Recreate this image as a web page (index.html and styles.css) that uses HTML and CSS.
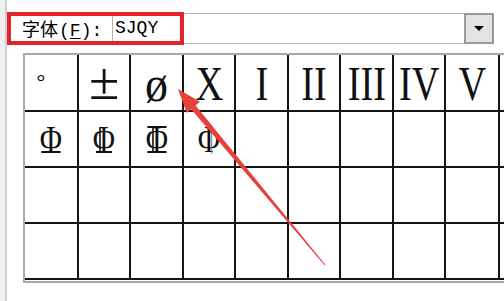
FILE: index.html
```html
<!DOCTYPE html>
<html lang="zh-CN">
<head>
<meta charset="utf-8">
<title>字体</title>
<link rel="stylesheet" href="styles.css">
</head>
<body>
<div class="app">
  <div class="strip"></div>
  <div class="main">
    <div class="font-row">
      <label class="font-label">字体<span class="lat">(<u>F</u>):</span></label>
      <div class="combo">
        <span class="combo-value">SJQY</span>
        <span class="combo-btn"><svg width="10" height="6" viewBox="0 0 10 6"><polygon points="0,0 10,0 5,5" fill="#000"/></svg></span>
      </div>
    </div>
    <div class="grid-frame">
      <div class="grid">
        <div class="cell top"><span class="deg">°</span></div>
        <div class="cell top"><span class="sym pm">±</span></div>
        <div class="cell top"><span class="sym phi">ø</span></div>
        <div class="cell top"><span class="sym">X</span></div>
        <div class="cell top"><span class="sym">I</span></div>
        <div class="cell top"><span class="sym">II</span></div>
        <div class="cell top"><span class="sym">III</span></div>
        <div class="cell top"><span class="sym">IV</span></div>
        <div class="cell top"><span class="sym">V</span></div>
        <div class="cell top"></div>

        <div class="cell mid"><span class="rebar r1">Φ<i class="bar bottom"></i></span></div>
        <div class="cell mid"><span class="rebar r2">Φ<i class="stem left"></i><i class="bar bottom short"></i></span></div>
        <div class="cell mid"><span class="rebar r3">Φ<i class="stem left"></i><i class="bar top"></i><i class="bar bottom"></i></span></div>
        <div class="cell mid"><span class="rebar r4">Φ<i class="stem right thin"></i></span></div>
        <div class="cell"></div><div class="cell"></div><div class="cell"></div><div class="cell"></div><div class="cell"></div><div class="cell"></div>

        <div class="cell"></div><div class="cell"></div><div class="cell"></div><div class="cell"></div><div class="cell"></div>
        <div class="cell"></div><div class="cell"></div><div class="cell"></div><div class="cell"></div><div class="cell"></div>

        <div class="cell"></div><div class="cell"></div><div class="cell"></div><div class="cell"></div><div class="cell"></div>
        <div class="cell"></div><div class="cell"></div><div class="cell"></div><div class="cell"></div><div class="cell"></div>
      </div>
    </div>
  </div>
</div>
<div class="highlight"></div>
<svg class="arrow" width="504" height="301" viewBox="0 0 504 301">
  <polygon points="178,89 200,101.8 195.6,105.6 325.4,264.7 324.6,265.3 191.2,109.2 186.8,113" fill="#e8403b"/>
</svg>
</body>
</html>
```
FILE: styles.css
```css
* { box-sizing: border-box; }
html, body {
  margin: 0;
  padding: 0;
  width: 504px;
  height: 301px;
  overflow: hidden;
  background: #fff;
}
body {
  position: relative;
  font-family: "Noto Sans CJK SC", sans-serif;
  color: #000;
}
.app {
  display: flex;
  height: 301px;
}
.strip {
  flex: none;
  width: 7px;
  background: #f0f0f0;
  border-right: 2px solid #d0d0d0;
}
.main {
  flex: 1;
  min-width: 0;
  padding-top: 13px;
  overflow: hidden;
}
.font-row {
  display: flex;
  height: 31px;
}
.font-label {
  flex: none;
  width: 105px;
  padding-left: 15px;
  font-size: 18px;
  line-height: 31px;
  white-space: nowrap;
}
.font-label .lat {
  font-family: "Liberation Mono", monospace;
  font-size: 18px;
  margin-left: 1px;
}
.font-label u { text-decoration-thickness: 1px; text-underline-offset: 2px; }
.combo {
  flex: none;
  width: 382px;
  display: flex;
  border: 1px solid #b4b4b4;
}
.combo-value {
  flex: 1;
  font-family: "Liberation Mono", monospace;
  font-size: 18px;
  line-height: 29px;
  padding-left: 2px;
}
.combo-btn {
  flex: none;
  width: 30px;
  display: flex;
  align-items: center;
  justify-content: center;
  background: #e3e3e3;
  border: 2px solid #9a9a9a;
  margin: -1px -1px -1px 0;
}
.grid-frame {
  margin: 9px 0 0 16px;
  border-left: 2px solid #a8a8a8;
  border-top: 2px solid #a8a8a8;
  border-bottom: 2px solid #a8a8a8;
  padding-bottom: 1px;
  overflow: hidden;
}
.grid {
  display: grid;
  grid-template-columns: 54px 52px 53px 52px 53px 52px 53px 52px 54px 52px;
  grid-template-rows: 57px 56px 56px 56px;
}
.cell {
  border-right: 2px solid #141414;
  border-bottom: 2px solid #141414;
  display: flex;
  justify-content: center;
  align-items: flex-start;
}
.cell.top { padding-top: 5px; }
.cell.mid { padding-top: 8px; }
.sym {
  font-family: "Liberation Serif", serif;
  font-size: 48px;
  line-height: 48px;
  color: #111;
  transform: scaleX(0.8);
  white-space: nowrap;
}
.sym.pm { transform: scale(1.15, 1.08); margin-top: -2px; }
.sym.phi { font-size: 50px; line-height: 48px; transform: scaleX(0.92); }
.deg {
  font-family: "Liberation Serif", serif;
  font-size: 22px;
  line-height: 22px;
  margin: 11px 20px 0 0;
}
.rebar {
  position: relative;
  font-family: "Liberation Serif", serif;
  font-size: 38px;
  line-height: 38px;
  transform: scaleX(0.8);
  color: #111;
}
.rebar i {
  position: absolute;
  background: #111;
}
.bar { height: 2px; left: 8%; right: 8%; }
.bar.bottom { top: 31px; }
.bar.top { top: 6px; }
.bar.short { left: 14%; right: 14%; }
.stem { width: 2px; top: 7px; height: 25px; }
.stem.left { left: calc(50% - 6px); }
.stem.right { left: calc(50% + 3px); }
.stem.thin { width: 1px; background: #666; top: 6px; height: 28px; }
.highlight {
  position: absolute;
  left: 7px;
  top: 12px;
  width: 177px;
  height: 33px;
  border: 4px solid #e3242b;
}
.arrow {
  position: absolute;
  left: 0;
  top: 0;
}
```
